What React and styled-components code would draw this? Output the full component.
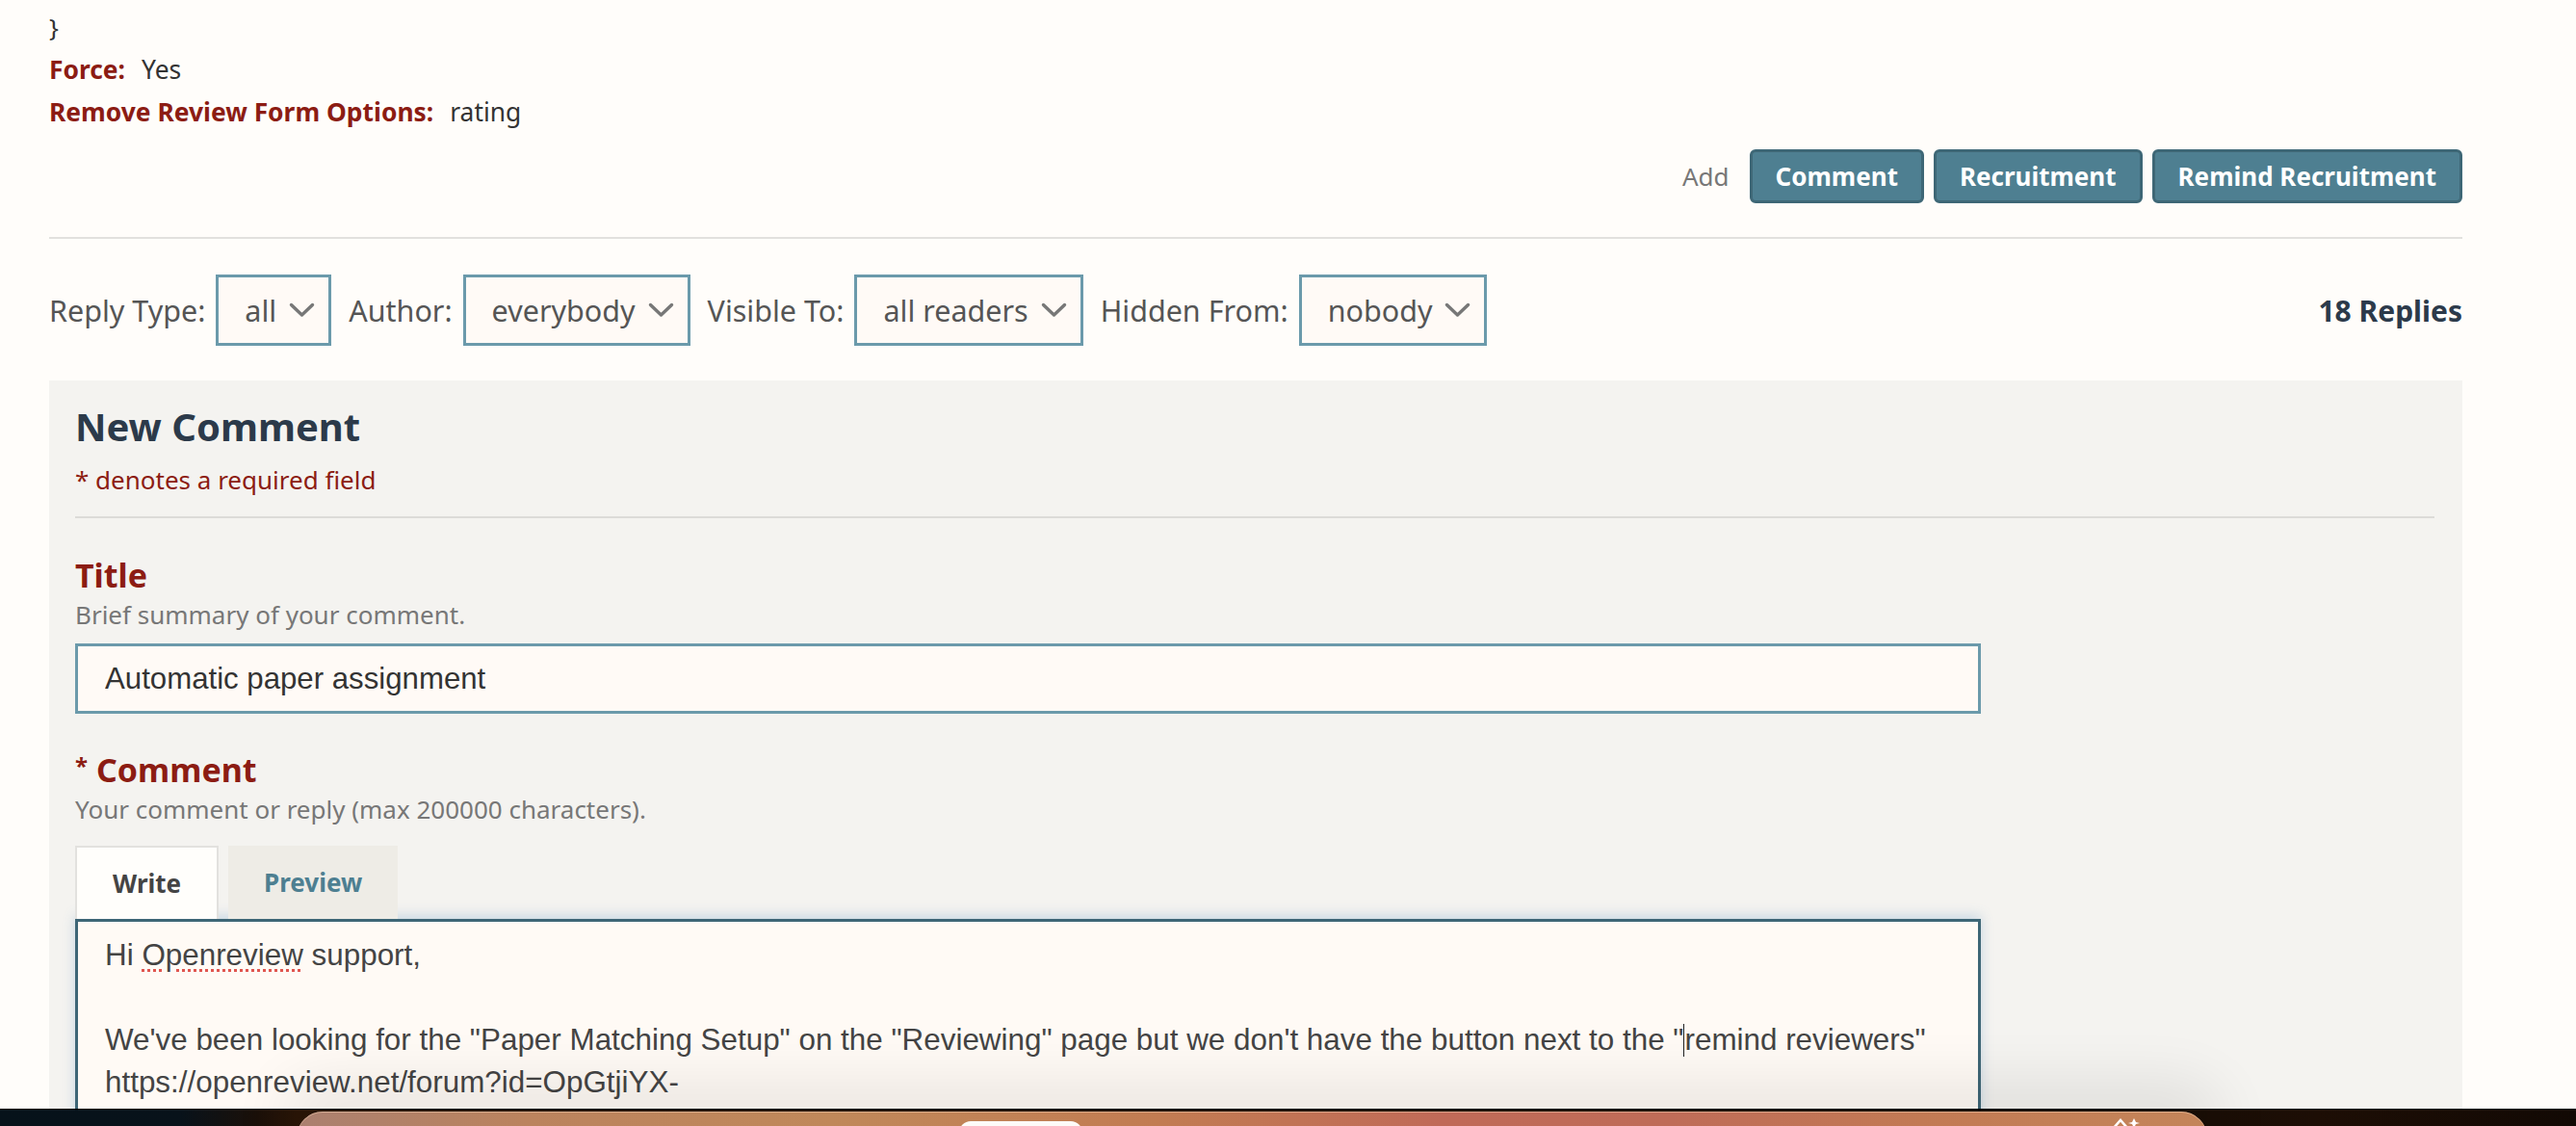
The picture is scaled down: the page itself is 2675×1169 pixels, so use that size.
import React from 'react';
import styled, { createGlobalStyle } from 'styled-components';

const GlobalStyle = createGlobalStyle`
  html, body { margin: 0; padding: 0; overflow: hidden; background: #fffdfa; }
  body { font-family: "Noto Sans", "Open Sans", sans-serif; color: #333; }
  * { box-sizing: border-box; }
`;

const Page = styled.div`
  position: relative;
  width: 2675px;
  height: 1169px;
  overflow: hidden;
  background: #fffdfa;
`;

const Content = styled.main`
  width: 2506px;
  margin-left: 51px;
`;

const CodeTail = styled.div`
  margin-top: -38px;
  font-size: 26px;
  line-height: 44px;
  white-space: pre;
  color: #333;
`;

const Detail = styled.div`
  display: flex;
  font-size: 26.4px;
  line-height: 44px;
`;

const DetailLabel = styled.span`
  font-weight: 700;
  color: #8c1c13;
  margin-right: 17px;
`;

const DetailValue = styled.span`
  color: #333;
`;

const ActionRow = styled.div`
  display: flex;
  justify-content: flex-end;
  align-items: center;
  gap: 10px;
  margin-top: 17px;
`;

const AddLabel = styled.span`
  font-size: 26px;
  color: #777;
  margin-right: 11px;
`;

const ActionButton = styled.button`
  height: 56px;
  padding: 0 24px;
  font-family: inherit;
  font-size: 26px;
  font-weight: 700;
  line-height: 1;
  color: #fff;
  background: #4e7f91;
  border: 3px solid #3e6776;
  border-radius: 6px;
`;

const Divider = styled.hr`
  border: 0;
  border-top: 2px solid #e2e1de;
  margin: 35px 0 0;
`;

const FilterRow = styled.div`
  display: flex;
  align-items: center;
  justify-content: space-between;
  margin-top: 37px;
`;

const Filters = styled.div`
  display: flex;
  align-items: center;
  gap: 18px;
`;

const FilterGroup = styled.div`
  display: flex;
  align-items: center;
  gap: 11px;
  font-size: 30.5px;
  color: #555;
`;

const SelectBox = styled.div`
  display: flex;
  align-items: center;
  gap: 13px;
  height: 74px;
  padding: 0 14px 0 27px;
  border: 3px solid #6b9aab;
  background: #fffaf6;
  color: #555;
  font-size: 30.5px;
`;

const RepliesCount = styled.div`
  font-size: 30px;
  font-weight: 700;
  color: #2c3a4a;
`;

const Panel = styled.section`
  margin-top: 36px;
  height: 900px;
  background: #f4f3f0;
  padding: 24px 29px 0 27px;
`;

const PanelTitle = styled.h2`
  margin: 0;
  font-size: 40px;
  line-height: 48px;
  font-weight: 700;
  color: #2c3a4a;
`;

const RequiredNote = styled.p`
  margin: 13px 0 0;
  font-size: 26px;
  line-height: 36px;
  color: #8c1c13;
`;

const PanelDivider = styled.hr`
  border: 0;
  border-top: 2px solid #dcdbd8;
  margin: 20px 0 0;
`;

const FieldTitle = styled.h3`
  margin: ${p => p.$gap}px 0 0;
  font-size: 34px;
  line-height: 44px;
  font-weight: 700;
  color: #8c1c13;
`;

const ReqMark = styled.span`
  font-size: 24px;
  vertical-align: 8px;
  margin-right: 9px;
`;

const FieldHint = styled.p`
  margin: 1px 0 0;
  font-size: 26px;
  line-height: 36px;
  color: #777;
`;

const TextInput = styled.input`
  display: block;
  margin-top: 12px;
  width: 1979px;
  height: 73px;
  border: 3px solid #6b9aab;
  background: #fffaf6;
  padding: 0 28px;
  font-family: "Liberation Sans", Arial, sans-serif;
  font-size: 31.2px;
  color: #333;
  outline: none;
`;

const Tabs = styled.div`
  display: flex;
  gap: 10px;
  margin-top: 20px;
`;

const Tab = styled.div`
  height: 76px;
  padding: 0 37px;
  display: flex;
  align-items: center;
  justify-content: center;
  font-size: 26px;
  font-weight: 700;
  ${p => p.$active
    ? 'background:#fffefb; border:2px solid #e2e1de; border-bottom:0; color:#444;'
    : 'background:#eeece6; color:#4d7f91;'}
`;

const Editor = styled.div`
  width: 1979px;
  height: 320px;
  border: 3px solid #3e6676;
  background: #fffaf5;
  padding: 13px 28px;
  font-family: "Liberation Sans", Arial, sans-serif;
  font-size: 31.4px;
  line-height: 44px;
  color: #444;
  white-space: pre;
  box-shadow: 0 -3px 12px rgba(80, 140, 190, 0.28);
`;

const Misspelled = styled.span`
  text-decoration: underline dotted #e0564f;
  text-decoration-thickness: 3px;
  text-underline-offset: 4px;
`;

const Caret = styled.span`
  display: inline-block;
  width: 0;
  height: 34px;
  border-left: 1.5px solid #222;
  vertical-align: -7px;
`;

const Dock = styled.div`
  position: absolute;
  left: 0;
  right: 0;
  bottom: 0;
  height: 18px;
  background: linear-gradient(90deg, #06121a 0%, #08121a 7%, #1b1009 10%, #2a1507 11.5%, #1a0e06 86%, #1d0e05 90%, #120904 100%);
  border-top: 1px solid #000;
`;

const DockBar = styled.div`
  position: absolute;
  left: 308px;
  width: 1984px;
  top: 2px;
  bottom: -12px;
  border-radius: 28px 28px 0 0;
  background: linear-gradient(90deg, #ab8070 0%, #bb835e 12%, #c0885a 28%, #c27c52 45%, #c06a58 60%, #bf6c58 72%, #c27a54 85%, #c4855a 100%);
  box-shadow: 0 -14px 60px 16px rgba(0, 0, 0, 0.09), inset 0 1px 0 rgba(255, 220, 190, 0.5);
`;

const DockPill = styled.div`
  position: absolute;
  left: 688px;
  top: 10px;
  width: 128px;
  height: 20px;
  border-radius: 12px 12px 0 0;
  background: #fdfbf8;
`;

const DockIcon = styled.svg`
  position: absolute;
  left: 1880px;
  top: 4px;
`;

const Chevron = () => (
  <svg width="27" height="16" viewBox="0 0 27 16" fill="none">
    <path d="M2.5 2.5 L13.5 13 L24.5 2.5" stroke="#777" strokeWidth="3.4" strokeLinecap="round" strokeLinejoin="round" />
  </svg>
);

const filters = [
  { label: 'Reply Type:', value: 'all' },
  { label: 'Author:', value: 'everybody' },
  { label: 'Visible To:', value: 'all readers' },
  { label: 'Hidden From:', value: 'nobody' },
];

export default function App() {
  return (
    <Page>
      <GlobalStyle />
      <Content>
        <CodeTail>{'    }\n}'}</CodeTail>
        <Detail>
          <DetailLabel>Force:</DetailLabel>
          <DetailValue>Yes</DetailValue>
        </Detail>
        <Detail>
          <DetailLabel>Remove Review Form Options:</DetailLabel>
          <DetailValue>rating</DetailValue>
        </Detail>

        <ActionRow>
          <AddLabel>Add</AddLabel>
          <ActionButton>Comment</ActionButton>
          <ActionButton>Recruitment</ActionButton>
          <ActionButton>Remind Recruitment</ActionButton>
        </ActionRow>

        <Divider />

        <FilterRow>
          <Filters>
            {filters.map(f => (
              <FilterGroup key={f.label}>
                <span>{f.label}</span>
                <SelectBox>
                  <span>{f.value}</span>
                  <Chevron />
                </SelectBox>
              </FilterGroup>
            ))}
          </Filters>
          <RepliesCount>18 Replies</RepliesCount>
        </FilterRow>

        <Panel>
          <PanelTitle>New Comment</PanelTitle>
          <RequiredNote>* denotes a required field</RequiredNote>
          <PanelDivider />

          <FieldTitle $gap={37}>Title</FieldTitle>
          <FieldHint>Brief summary of your comment.</FieldHint>
          <TextInput readOnly value="Automatic paper assignment" />

          <FieldTitle $gap={32}><ReqMark>*</ReqMark>Comment</FieldTitle>
          <FieldHint>Your comment or reply (max 200000 characters).</FieldHint>

          <Tabs>
            <Tab $active>Write</Tab>
            <Tab>Preview</Tab>
          </Tabs>
          <Editor>
            {'Hi '}<Misspelled>Openreview</Misspelled>{' support,\n\n'}
            {'We\'ve been looking for the "Paper Matching Setup" on the "Reviewing" page but we don\'t have the button next to the "'}<Caret />{'remind reviewers"\n'}
            {'https://openreview.net/forum?id=OpGtjiYX-'}
          </Editor>
        </Panel>
      </Content>

      <Dock>
        <DockBar>
          <DockPill />
          <DockIcon width="44" height="14" viewBox="0 0 44 14">
            <path d="M6 14 L14 5 L22 14" stroke="#fff" strokeWidth="2.5" fill="none" />
            <path d="M28 3 l2 4 l4 1 l-4 1 l-2 4 l-2 -4 l-4 -1 l4 -1 z" fill="#fff" />
          </DockIcon>
        </DockBar>
      </Dock>
    </Page>
  );
}
